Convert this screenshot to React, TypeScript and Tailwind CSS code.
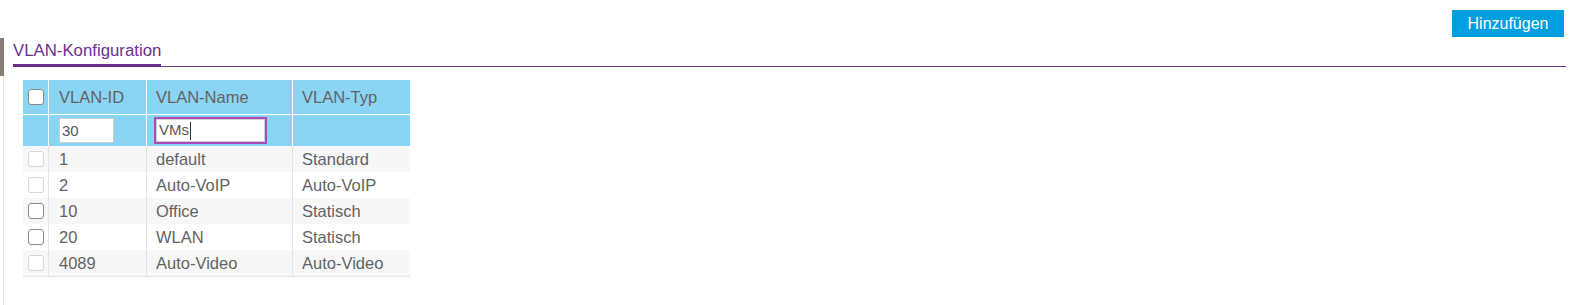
import { useState } from "react";

type Vlan = {
  id: string;
  name: string;
  type: string;
  editable: boolean;
};

const vlans: Vlan[] = [
  { id: "1", name: "default", type: "Standard", editable: false },
  { id: "2", name: "Auto-VoIP", type: "Auto-VoIP", editable: false },
  { id: "10", name: "Office", type: "Statisch", editable: true },
  { id: "20", name: "WLAN", type: "Statisch", editable: true },
  { id: "4089", name: "Auto-Video", type: "Auto-Video", editable: false },
];

function Box({ enabled = true }: { enabled?: boolean }) {
  return (
    <div
      className={`h-[16px] w-[16px] rounded-[3px] border bg-white ${
        enabled ? "border-[#8a8a8a]" : "border-[#d6d6d6]"
      }`}
    />
  );
}

export default function App() {
  const [vlanId, setVlanId] = useState("30");

  return (
    <div
      className="h-[305px] w-[1571px] overflow-hidden bg-white text-[#636363]"
      style={{ fontFamily: '"Liberation Sans", Arial, sans-serif' }}
    >
      <div className="flex justify-end pt-[10px] pr-[7px]">
        <button className="h-[27px] w-[112px] bg-[#00a0e0] text-[16px] leading-none text-white">
          Hinzufügen
        </button>
      </div>

      <div className="mt-px ml-[3px] h-[267px] border-l border-[#e4e4e4]">
        <div className="-ml-[4px] h-[38px] border-l-4 border-[#877c75] pl-[9px] pr-[5px]">
          <div className="flex h-[29px] items-end border-b border-[#6a3a8e]">
            <div className="-mb-px border-b-[3px] border-[#6a2f8f] pb-[4px] text-[16.8px] leading-[19px] text-[#6c2e91]">
              VLAN-Konfiguration
            </div>
          </div>
        </div>

        <div className="ml-[19px] mt-[4px] w-[387px] text-[16.5px]">
          <div className="grid grid-cols-[26px_98px_146px_117px] bg-[#8ad4f4]">
            <div className="flex h-[35px] items-center justify-center border-r border-b border-white">
              <Box />
            </div>
            <div className="flex items-center border-r border-b border-white pl-[10px]">VLAN-ID</div>
            <div className="flex items-center border-r border-b border-white pl-[9px]">VLAN-Name</div>
            <div className="flex items-center border-b border-white pl-[9px]">VLAN-Typ</div>

            <div className="h-[31px] border-r border-white" />
            <div className="flex items-center border-r border-white pl-[10px]">
              <input
                value={vlanId}
                onChange={(e) => setVlanId(e.target.value)}
                className="h-[25px] w-[55px] border border-[#cfcfcf] bg-white px-[2px] text-[15px] text-[#555] outline-none"
              />
            </div>
            <div className="flex items-center border-r border-white pl-[7px]">
              <div className="flex h-[27px] w-[113px] items-center border-2 border-[#ad4cb6] bg-white">
                <div className="flex h-full w-full items-center border border-[#d0d0d0] pl-[2px] text-[15px] text-[#555]">
                  VMs
                  <span className="ml-px h-[18px] w-px bg-[#333]" />
                </div>
              </div>
            </div>
            <div />
          </div>

          <div className="border-b border-[#e2e2e2]">
            {vlans.map((v, i) => (
              <div
                key={v.id}
                className={`grid h-[26px] grid-cols-[26px_98px_146px_117px] ${
                  i % 2 === 0 ? "bg-[#f7f7f7]" : "bg-white"
                }`}
              >
                <div className="flex items-center justify-center border-r border-[#e4e4e4]">
                  <Box enabled={v.editable} />
                </div>
                <div className="flex items-center border-r border-[#e4e4e4] pl-[10px]">{v.id}</div>
                <div className="flex items-center border-r border-[#e4e4e4] pl-[9px]">{v.name}</div>
                <div className="flex items-center pl-[9px]">{v.type}</div>
              </div>
            ))}
          </div>
        </div>
      </div>
    </div>
  );
}
